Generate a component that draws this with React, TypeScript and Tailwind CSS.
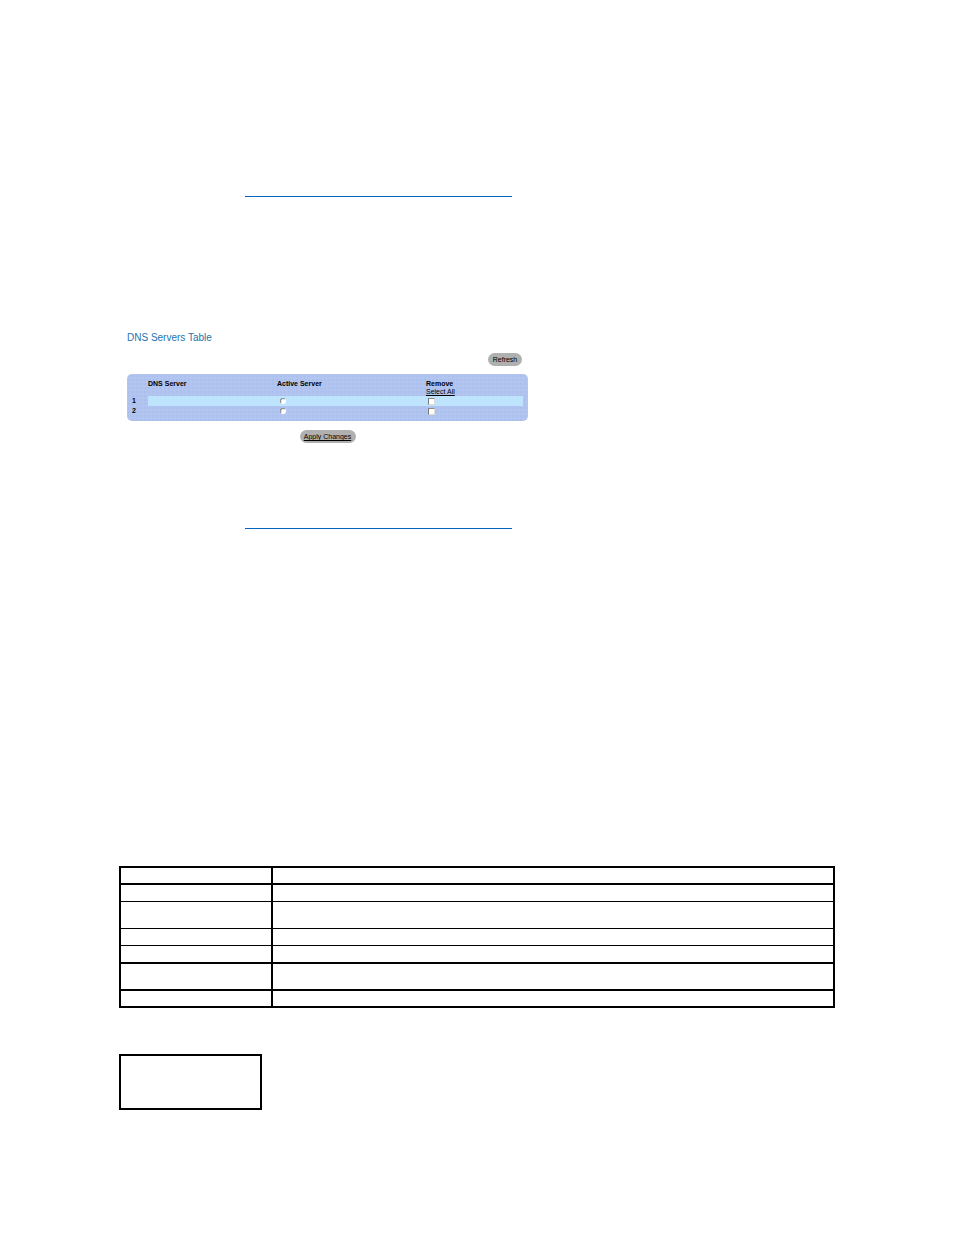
import { useState } from "react";

const servers = [1, 2];

const rows = [
  "h-[17px] *:border-b-2",
  "h-[17px] *:border-b",
  "h-[27px] *:border-b",
  "h-[17px] *:border-b",
  "h-[18px] *:border-b-2",
  "h-[27px] *:border-b-2",
  "h-[17px] *:border-b-2",
];

function DnsServersTable() {
  const [active, setActive] = useState<number | null>(null);
  const [removed, setRemoved] = useState<number[]>([]);

  const toggle = (id: number) =>
    setRemoved((list) => (list.includes(id) ? list.filter((n) => n !== id) : [...list, id]));

  return (
    <section className="ml-2 max-w-[401px]">
      <h1 className="text-[10px] leading-3 text-[#2473b0]">DNS Servers Table</h1>
      <div className="mt-[9px] flex justify-end pr-[6px]">
        <button type="button" className="h-[13px] w-[34px] rounded-full bg-[#b0b0b0] text-center text-[7px] leading-[13px] text-black">
          Refresh
        </button>
      </div>
      <div className="mt-2 rounded-[5px] bg-[#b1c5f0] bg-[radial-gradient(#abbfed_1px,transparent_1px)] bg-[size:4px_4px] pt-[6px] pr-[5px] pb-[5px]">
        <table className="w-full table-fixed border-separate border-spacing-0 text-left text-[7px] leading-2 text-black">
          <colgroup>
            <col className="w-[21px]" />
            <col className="w-[129px]" />
            <col className="w-[149px]" />
            <col />
          </colgroup>
          <thead>
            <tr className="h-4 align-top">
              <td className="p-0" />
              <th className="p-0 font-bold">DNS Server</th>
              <th className="p-0 font-bold">Active Server</th>
              <th className="p-0 font-bold">
                Remove
                <button
                  type="button"
                  className="block font-normal underline"
                  onClick={() => setRemoved(servers)}
                >
                  Select All
                </button>
              </th>
            </tr>
          </thead>
          <tbody>
            {servers.map((id) => (
              <tr key={id} className="group h-[10px]">
                <th className="p-0 pl-[5px] font-bold">{id}</th>
                <td className="p-0 group-odd:bg-[#bde3fd]" />
                <td className="p-0 pl-[3px] group-odd:bg-[#bde3fd]">
                  <input
                    type="radio"
                    name="active-server"
                    aria-label={`Active server ${id}`}
                    checked={active === id}
                    onChange={() => setActive(id)}
                    className="block size-[6px] appearance-none rounded-full border border-t-[#8a8a8a] border-r-white border-b-white border-l-[#8a8a8a] bg-white checked:bg-black"
                  />
                </td>
                <td className="p-0 pl-[2px] group-odd:bg-[#bde3fd]">
                  <input
                    type="checkbox"
                    aria-label={`Remove server ${id}`}
                    checked={removed.includes(id)}
                    onChange={() => toggle(id)}
                    className="block size-[7px] appearance-none border border-t-[#8a8a8a] border-r-[#dcd9d2] border-b-[#dcd9d2] border-l-[#777] bg-white checked:bg-black"
                  />
                </td>
              </tr>
            ))}
          </tbody>
        </table>
      </div>
      <div className="mt-[9px] flex justify-center">
        <button type="button" className="h-[13px] w-14 rounded-full bg-[#b0b0b0] text-center text-[7px] leading-[13px] text-black underline">
          Apply Changes
        </button>
      </div>
    </section>
  );
}

export default function App() {
  return (
    <main className="min-h-screen bg-white px-[119px] pt-[196px] pb-[125px] font-['Liberation_Sans',Arial,sans-serif]">
      <hr className="ml-[126px] max-w-[267px] border-t border-[#0066bf]" />
      <div className="mt-[135px]">
        <DnsServersTable />
      </div>
      <hr className="mt-[85px] ml-[126px] max-w-[267px] border-t border-[#0066bf]" />
      <table className="mt-[337px] w-full table-fixed border-separate border-spacing-0 border-t-2 border-l-2 border-black text-[10px] leading-3">
        <colgroup>
          <col className="w-[152px]" />
          <col />
        </colgroup>
        <tbody>
          {rows.map((row, i) => (
            <tr key={i} className={row}>
              <td className="border-r-2 border-black p-0" />
              <td className="border-r-2 border-black p-0" />
            </tr>
          ))}
        </tbody>
      </table>
      <div className="mt-[46px] h-14 w-[143px] border-2 border-black" />
    </main>
  );
}
